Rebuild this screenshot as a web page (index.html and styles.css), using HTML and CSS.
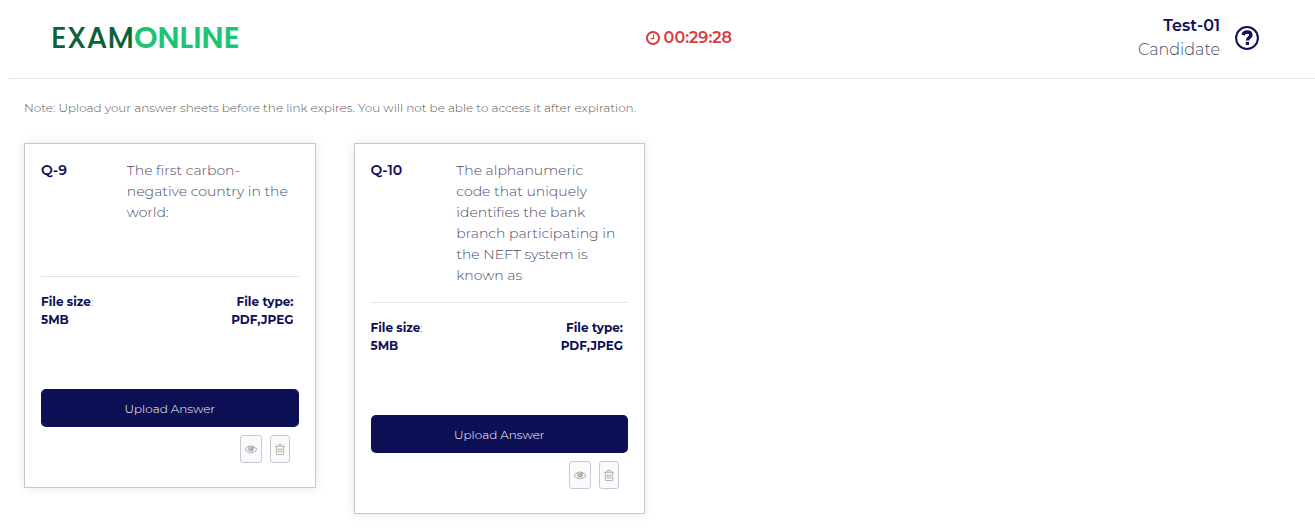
FILE: index.html
```html
<!DOCTYPE html>
<html lang="en">
<head>
    <meta charset="UTF-8">
    <meta name="viewport" content="width=device-width, initial-scale=1.0">
    <title>Exam Online</title>
    <link rel="stylesheet" href="styles.css">
</head>
<body>

    <!-- Shared icons -->
    <svg class="icon-defs" aria-hidden="true">
        <symbol id="icon-eye" viewBox="0 0 1792 1792">
            <path d="M1664 960q-152-236-381-353 61 104 61 225 0 185-131.5 316.5t-316.5 131.5-316.5-131.5-131.5-316.5q0-121 61-225-229 117-381 353 133 205 333.5 326.5t434.5 121.5 434.5-121.5 333.5-326.5zm-720-384q0-20-14-34t-34-14q-125 0-214.5 89.5t-89.5 214.5q0 20 14 34t34 14 34-14 14-34q0-86 61-147t147-61q20 0 34-14t14-34zm848 384q0 34-20 69-140 230-376.5 368.5t-499.5 138.5-499.5-139-376.5-368q-20-35-20-69t20-69q140-229 376.5-368t499.5-139 499.5 139 376.5 368q20 35 20 69z"/>
        </symbol>
        <symbol id="icon-trash" viewBox="192 128 1408 1536">
            <path d="M704 736v576q0 14-9 23t-23 9h-64q-14 0-23-9t-9-23v-576q0-14 9-23t23-9h64q14 0 23 9t9 23zm256 0v576q0 14-9 23t-23 9h-64q-14 0-23-9t-9-23v-576q0-14 9-23t23-9h64q14 0 23 9t9 23zm256 0v576q0 14-9 23t-23 9h-64q-14 0-23-9t-9-23v-576q0-14 9-23t23-9h64q14 0 23 9t9 23zm128 724v-948h-896v948q0 22 7 40.5t14.5 27 10.5 8.5h832q3 0 10.5-8.5t14.5-27 7-40.5zm-672-1076h448l-48-117q-7-9-17-11h-317q-10 2-17 11zm928 32v64q0 14-9 23t-23 9h-96v948q0 83-47 143.5t-113 60.5h-832q-66 0-113-58.5t-47-141.5v-952h-96q-14 0-23-9t-9-23v-64q0-14 9-23t23-9h309l70-167q15-37 54-63t79-26h320q40 0 79 26t54 63l70 167h309q14 0 23 9t9 23z"/>
        </symbol>
    </svg>

    <!-- Header -->
    <header class="header">
        <div class="logo">EXAM<span>ONLINE</span></div>
        <div class="timer">
            <svg class="timer-icon" viewBox="0 128 1536 1536" aria-hidden="true">
                <path d="M896 544v448q0 14-9 23t-23 9h-320q-14 0-23-9t-9-23v-64q0-14 9-23t23-9h224v-352q0-14 9-23t23-9h64q14 0 23 9t9 23zm416 352q0-148-73-273t-198-198-273-73-273 73-198 198-73 273 73 273 198 198 273 73 273-73 198-198 73-273zm224 0q0 209-103 385.5t-279.5 279.5-385.5 103-385.5-103-279.5-279.5-103-385.5 103-385.5 279.5-279.5 385.5-103 385.5 103 279.5 279.5 103 385.5z"/>
            </svg>
            <span>00:29:28</span>
        </div>
        <div class="user">
            <div class="user-info">
                <strong>Test-01</strong>
                <span>Candidate</span>
            </div>
            <button type="button" class="help" aria-label="Help">
                <svg viewBox="0 0 24 24" aria-hidden="true">
                    <circle cx="12" cy="12" r="10.9" stroke-width="2"/>
                    <path d="M8 9C8.7 6.8 10.2 6 12.1 6C14.4 6 15.9 7.2 15.9 9C15.9 11.4 12.4 11.6 12.4 14.6" stroke-width="3.4"/>
                    <path d="M12.4 15.8V19" stroke-width="3.2"/>
                </svg>
            </button>
        </div>
    </header>

    <!-- Questions -->
    <main class="content">
        <p class="note">Note: Upload your answer sheets before the link expires. You will not be able to access it after expiration.</p>

        <div class="cards">
            <div class="card">
                <div class="question">
                    <strong>Q-9</strong>
                    <p>The first carbon-negative country in the world:</p>
                </div>
                <div class="file-info">
                    <p><strong>File size</strong>:<br><strong>5MB</strong></p>
                    <p class="file-type"><strong>File type:<br>PDF,JPEG</strong></p>
                </div>
                <button type="button" class="btn">Upload Answer</button>
                <div class="actions">
                    <button type="button" class="btn-icon" aria-label="View" disabled><svg class="eye"><use href="#icon-eye"/></svg></button>
                    <button type="button" class="btn-icon" aria-label="Delete" disabled><svg class="trash"><use href="#icon-trash"/></svg></button>
                </div>
            </div>

            <div class="card">
                <div class="question">
                    <strong>Q-10</strong>
                    <p>The alphanumeric code that uniquely identifies the bank branch participating in the NEFT system is known as</p>
                </div>
                <div class="file-info">
                    <p><strong>File size</strong>:<br><strong>5MB</strong></p>
                    <p class="file-type"><strong>File type:<br>PDF,JPEG</strong></p>
                </div>
                <button type="button" class="btn">Upload Answer</button>
                <div class="actions">
                    <button type="button" class="btn-icon" aria-label="View" disabled><svg class="eye"><use href="#icon-eye"/></svg></button>
                    <button type="button" class="btn-icon" aria-label="Delete" disabled><svg class="trash"><use href="#icon-trash"/></svg></button>
                </div>
            </div>
        </div>
    </main>

</body>
</html>
```
FILE: styles.css
```css
/* Global Reset */
* { margin: 0; padding: 0; box-sizing: border-box; }

body { font-family: Montserrat, Inter, sans-serif; font-size: 14px; font-weight: 300; color: #4a4a68; background-color: #fff; }

strong { font-weight: 600; color: #0e1055; }

svg { display: block; fill: currentColor; }

.icon-defs { display: none; }

/* Header */
.header {
    display: flex;
    justify-content: space-between;
    align-items: center;
    margin-left: 9px;
    padding: 14px 56px 16px 42px;
    border-bottom: 1px solid #e2e2e2;
}

.logo {
    font-family: Poppins, Inter, sans-serif;
    font-size: 30px;
    line-height: 48px;
    font-weight: 500;
    color: #0b6138;
}

.logo span {
    font-weight: 600;
    color: #1bc576;
}

.timer {
    display: flex;
    align-items: center;
    gap: 4px;
    font-size: 16px;
    line-height: 24px;
    font-weight: 600;
    color: #d5403f;
}

.timer-icon {
    width: 14px;
    height: 14px;
}

.user {
    display: flex;
    align-items: center;
    gap: 15px;
}

.user-info {
    display: flex;
    flex-direction: column;
    text-align: right;
    font-size: 16px;
    line-height: 24px;
}

.help {
    width: 24px;
    height: 24px;
    border: none;
    background: none;
    color: #0e1055;
    cursor: pointer;
}

.help svg {
    width: 24px;
    height: 24px;
    fill: none;
    stroke: currentColor;
}

/* Content */
.content {
    padding: 20px 11px 16px 24px;
}

.note {
    font-size: 12px;
    line-height: 18px;
    color: #555;
}

.cards {
    display: grid;
    grid-template-columns: repeat(4, 1fr);
    gap: 38px;
    align-items: start;
    margin-top: 26px;
}

.card {
    padding: 16px 16px 24px;
    border: 1px solid #c8c8c8;
    box-shadow: 0 0 10px rgba(0, 0, 0, 0.1);
}

.question {
    display: grid;
    grid-template-columns: 1fr 2fr;
    min-height: 117px;
    padding-bottom: 16px;
    border-bottom: 1px solid #e2e2e2;
    line-height: 21px;
}

.question p {
    padding-right: 8px;
}

.file-info {
    display: flex;
    justify-content: space-between;
    padding: 16px 5px 0 0;
    min-height: 112px;
    font-size: 12px;
    line-height: 18px;
}

.file-info strong {
    font-weight: 700;
}

.file-type {
    text-align: right;
}

/* Buttons */
.btn {
    display: block;
    width: 100%;
    height: 38px;
    border: none;
    border-radius: 5px;
    background-color: #0e1055;
    color: #fff;
    font: inherit;
    font-size: 12px;
    cursor: pointer;
}

.actions {
    display: flex;
    justify-content: flex-end;
    gap: 8px;
    padding: 8px 9px 0 0;
}

.btn-icon {
    height: 28px;
    padding: 0 4px;
    border: 1px solid #c9c7da;
    border-radius: 3px;
    background-color: #fafafa;
    color: #b0b0b0;
}

.eye {
    width: 12px;
    height: 12px;
}

.trash {
    width: 10px;
    height: 11px;
}

/* Responsive Design */
@media (max-width: 1000px) {
    .cards {
        grid-template-columns: repeat(auto-fill, minmax(260px, 1fr));
    }
}
```
